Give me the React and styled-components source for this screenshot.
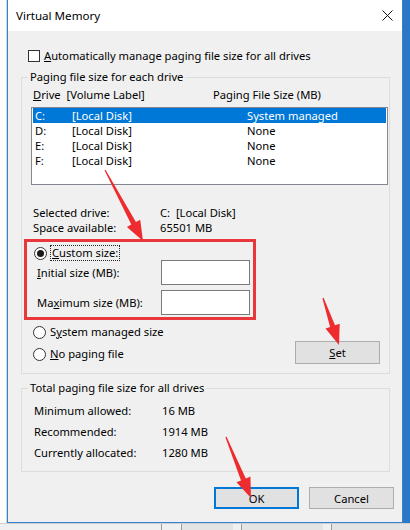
import React from 'react';
import styled, { createGlobalStyle } from 'styled-components';

const GlobalStyle = createGlobalStyle`
  * { box-sizing: border-box; }
  body {
    margin: 0;
    background: #ffffff;
    font-family: "Noto Sans", "Liberation Sans", sans-serif;
    font-size: 11.2px;
    color: #000;
  }
`;

const Page = styled.div`
  position: relative;
  width: 410px;
  height: 530px;
  overflow: hidden;
  display: flex;
  flex-direction: column;
  background: #f0f0f0;
`;

const TopArea = styled.div`
  display: flex;
  height: 523px;
`;

const LeftEdge = styled.div`
  width: 7px;
  background: #fcfcfc;
  border-right: 1px solid #d6d6d6;
`;

const RightEdge = styled.div`
  flex: 1;
  background: #2a78c4;
`;

const Dialog = styled.div`
  width: 396px;
  height: 523px;
  display: flex;
  flex-direction: column;
  border: 1px solid #3382d0;
  border-top: none;
  background: #f0f0f0;
`;

const TitleBar = styled.div`
  height: 31px;
  background: #ffffff;
  display: flex;
  align-items: center;
  justify-content: space-between;
  padding: 0 9px 0 8px;
  font-size: 11.6px;
`;

const CloseIcon = () => (
  <svg width="11" height="11" viewBox="0 0 11 11">
    <path d="M0.5 0.5 L10.5 10.5 M10.5 0.5 L0.5 10.5" stroke="#111" strokeWidth="1" />
  </svg>
);

const Body = styled.div`
  flex: 1;
  padding: 0 12px 0 13px;
  display: flex;
  flex-direction: column;
`;

const CheckRow = styled.label`
  display: flex;
  align-items: center;
  gap: 4px;
  height: 14px;
  margin: 18px 0 0 7px;
  line-height: 14px;
`;

const CheckBox = styled.span`
  width: 12px;
  height: 12px;
  border: 1px solid #333;
  background: #fff;
`;

const Group = styled.fieldset`
  margin: ${p => p.$top}px 0 0 0;
  padding: 0 0 ${p => p.$bottom}px 0;
  border: 1px solid #dcdcdc;
  min-width: 0;
`;

const Legend = styled.legend`
  margin-left: 6px;
  padding: 0 2px;
  line-height: 14px;
  height: 14px;
`;

const ListHeader = styled.div`
  display: grid;
  grid-template-columns: 180px 1fr;
  margin: 4px 0 0 11px;
  line-height: 14px;
`;

const ListBox = styled.div`
  height: 78px;
  margin: 5px 1px 0 9px;
  border: 1px solid #828790;
  background: #fff;
`;

const ListRow = styled.div`
  display: grid;
  grid-template-columns: 37px 175px 1fr;
  height: 15px;
  line-height: 15px;
  margin: 0 1px;
  padding-left: 2px;
  background: ${p => (p.$selected ? '#0078d7' : 'transparent')};
  color: ${p => (p.$selected ? '#fff' : '#000')};
`;

const InfoRow = styled.div`
  display: grid;
  grid-template-columns: ${p => p.$label}px 1fr;
  padding-left: ${p => p.$indent}px;
  height: ${p => p.$h}px;
  line-height: ${p => p.$h}px;
`;

const InfoBlock = styled.div`
  margin-top: ${p => p.$top}px;
`;

const Highlight = styled.div`
  margin: 4px 0 0 2px;
  width: 232px;
  border: 3px solid #e8383b;
  padding: 4px 0 2px 7px;
`;

const RadioRow = styled.label`
  display: flex;
  align-items: center;
  gap: 4px;
  height: 14px;
  line-height: 14px;
`;

const Radio = styled.span`
  width: 13px;
  height: 13px;
  border-radius: 50%;
  border: 1px solid #333;
  background: #fff;
  display: flex;
  align-items: center;
  justify-content: center;

  &::after {
    content: '';
    width: 7px;
    height: 7px;
    border-radius: 50%;
    background: ${p => (p.$checked ? '#1a1a1a' : 'transparent')};
  }
`;

const FocusText = styled.span`
  outline: 1px dotted #222;
  outline-offset: 0;
  padding: 0 1px;
`;

const SizeRow = styled.div`
  display: grid;
  grid-template-columns: 124px 89px;
  align-items: center;
  margin-top: ${p => p.$top}px;
  padding-left: 3px;
`;

const TextBox = styled.div`
  height: 25px;
  border: 1px solid #7a7a7a;
  background: #fff;
`;

const BottomArea = styled.div`
  display: flex;
  justify-content: space-between;
  align-items: flex-start;
  margin: 5px 9px 0 11px;
`;

const RadioColumn = styled.div`
  display: flex;
  flex-direction: column;
  gap: 8px;
`;

const Button = styled.div`
  width: 85px;
  height: ${p => p.$h || 22}px;
  margin-top: ${p => p.$top || 0}px;
  display: flex;
  align-items: center;
  justify-content: center;
  background: #e1e1e1;
  border: ${p => (p.$default ? '2px solid #0078d7' : '1px solid #adadad')};
`;

const ButtonRow = styled.div`
  display: flex;
  justify-content: flex-end;
  gap: 10px;
  margin: 15px -4px 0 0;
`;

const BottomStrip = styled.div`
  flex: 1;
  display: flex;
  border-top: 1px solid #d0d0d0;
  background: #f0f0f0;
`;

const StripPiece = styled.div`
  width: ${p => p.$w}px;
  border-left: ${p => (p.$line ? '1px solid #9a9a9a' : 'none')};
  background: ${p => p.$bg || 'transparent'};
`;

const Overlay = styled.svg`
  position: absolute;
  left: 0;
  top: 0;
  pointer-events: none;
`;

function arrowPoints(tx, ty, hx, hy) {
  const dx = hx - tx;
  const dy = hy - ty;
  const len = Math.hypot(dx, dy);
  const ux = dx / len;
  const uy = dy / len;
  const nx = -uy;
  const ny = ux;
  const head = 20;
  const bx = hx - ux * head;
  const by = hy - uy * head;
  const pts = [
    [tx + nx * 0.6, ty + ny * 0.6],
    [bx + nx * 2.6, by + ny * 2.6],
    [bx + nx * 7.5, by + ny * 7.5],
    [hx, hy],
    [bx - nx * 7.5, by - ny * 7.5],
    [bx - nx * 2.6, by - ny * 2.6],
    [tx - nx * 0.6, ty - ny * 0.6],
  ];
  return pts.map(p => p.map(v => v.toFixed(1)).join(',')).join(' ');
}

const arrows = [
  [105, 170, 143, 241],
  [323, 298, 339, 345],
  [226, 437, 251, 498],
];

const drives = [
  { d: 'C:', size: 'System managed', selected: true },
  { d: 'D:', size: 'None' },
  { d: 'E:', size: 'None' },
  { d: 'F:', size: 'None' },
];

export default function App() {
  return (
    <>
      <GlobalStyle />
      <Page>
        <TopArea>
          <LeftEdge />
          <Dialog>
            <TitleBar>
              <span>Virtual Memory</span>
              <CloseIcon />
            </TitleBar>
            <Body>
              <CheckRow>
                <CheckBox />
                <span><u>A</u>utomatically manage paging file size for all drives</span>
              </CheckRow>

              <Group $top={7} $bottom={9}>
                <Legend>Paging file size for each drive</Legend>
                <ListHeader>
                  <span><u>D</u>rive&nbsp;&nbsp;[Volume Label]</span>
                  <span>Paging File Size (MB)</span>
                </ListHeader>
                <ListBox>
                  {drives.map(r => (
                    <ListRow key={r.d} $selected={r.selected}>
                      <span>{r.d}</span>
                      <span>[Local Disk]</span>
                      <span>{r.size}</span>
                    </ListRow>
                  ))}
                </ListBox>

                <InfoBlock $top={20}>
                  <InfoRow $label={127} $indent={11} $h={15}>
                    <span>Selected drive:</span>
                    <span>C:&nbsp;&nbsp;[Local Disk]</span>
                  </InfoRow>
                  <InfoRow $label={127} $indent={11} $h={15}>
                    <span>Space available:</span>
                    <span>65501 MB</span>
                  </InfoRow>
                </InfoBlock>

                <Highlight>
                  <RadioRow>
                    <Radio $checked />
                    <FocusText><u>C</u>ustom size:</FocusText>
                  </RadioRow>
                  <SizeRow $top={0}>
                    <span><u>I</u>nitial size (MB):</span>
                    <TextBox />
                  </SizeRow>
                  <SizeRow $top={5}>
                    <span>Ma<u>x</u>imum size (MB):</span>
                    <TextBox />
                  </SizeRow>
                </Highlight>

                <BottomArea>
                  <RadioColumn>
                    <RadioRow>
                      <Radio />
                      <span>S<u>y</u>stem managed size</span>
                    </RadioRow>
                    <RadioRow>
                      <Radio />
                      <span><u>N</u>o paging file</span>
                    </RadioRow>
                  </RadioColumn>
                  <Button $top={16} $h={23}><span><u>S</u>et</span></Button>
                </BottomArea>
              </Group>

              <Group $top={7} $bottom={8}>
                <Legend>Total paging file size for all drives</Legend>
                <InfoBlock $top={5}>
                  <InfoRow $label={128} $indent={12} $h={21}>
                    <span>Minimum allowed:</span>
                    <span>16 MB</span>
                  </InfoRow>
                  <InfoRow $label={128} $indent={12} $h={21}>
                    <span>Recommended:</span>
                    <span>1914 MB</span>
                  </InfoRow>
                  <InfoRow $label={128} $indent={12} $h={21}>
                    <span>Currently allocated:</span>
                    <span>1280 MB</span>
                  </InfoRow>
                </InfoBlock>
              </Group>

              <ButtonRow>
                <Button $default>OK</Button>
                <Button>Cancel</Button>
              </ButtonRow>
            </Body>
          </Dialog>
          <RightEdge />
        </TopArea>
        <BottomStrip>
          <StripPiece $w={161} />
          <StripPiece $w={20} $line />
          <StripPiece $w={52} $bg="#e4e4e4" $line />
          <StripPiece $w={8} />
          <StripPiece $w={82} $bg="#e4e4e4" $line />
          <StripPiece $w={8} />
          <StripPiece $w={79} $bg="#e4e4e4" $line />
        </BottomStrip>
        <Overlay width="410" height="530" viewBox="0 0 410 530">
          {arrows.map((a, i) => (
            <polygon key={i} points={arrowPoints(...a)} fill="#ee2b2e" />
          ))}
        </Overlay>
      </Page>
    </>
  );
}
